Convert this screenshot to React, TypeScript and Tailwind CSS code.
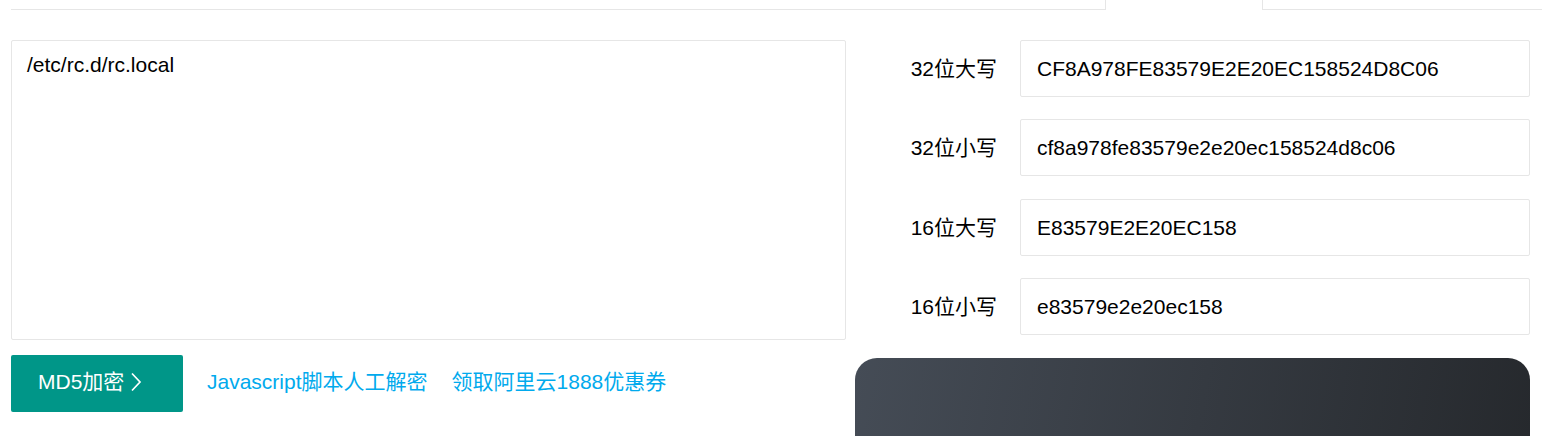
import React from 'react'

type HashRow = {
  label: string
  value: string
}

const rows: HashRow[] = [
  { label: '32位大写', value: 'CF8A978FE83579E2E20EC158524D8C06' },
  { label: '32位小写', value: 'cf8a978fe83579e2e20ec158524d8c06' },
  { label: '16位大写', value: 'E83579E2E20EC158' },
  { label: '16位小写', value: 'e83579e2e20ec158' },
]

export default function App() {
  return (
    <div
      className="w-[1542px] h-[436px] overflow-hidden bg-white text-black text-[21px]"
      style={{ fontFamily: '"Liberation Sans", "Noto Sans CJK SC", sans-serif' }}
    >
      {/* bottoms of the inputs above */}
      <div className="flex h-[10px]">
        <div className="shrink-0 ml-[11px] w-[1095px] border-b border-r border-[#e6e6e6]" />
        <div className="shrink-0 ml-[156px] w-[300px] border-b border-l border-[#e6e6e6]" />
      </div>

      <div className="flex mt-[30px] ml-[11px] gap-[9px]">
        <div className="w-[835px] flex flex-col">
          <div className="h-[300px] border border-[#e6e6e6] rounded-[2px] px-[15px] pt-[9px] leading-[30px]">
            /etc/rc.d/rc.local
          </div>
          <div className="flex items-center mt-[15px]">
            <button className="h-[57px] w-[172px] flex items-center pl-[27px] pb-[3px] bg-[#009688] text-white rounded-[2px]">
              MD5加密
              <svg width="12" height="20" viewBox="0 0 12 20" className="ml-[6px]">
                <path d="M2 1.5 L10 10 L2 18.5" fill="none" stroke="white" strokeWidth="1.7" />
              </svg>
            </button>
            <a className="ml-[24px] mb-[3px] text-[#01aaed]">Javascript脚本人工解密</a>
            <a className="ml-[24px] mb-[3px] text-[#01aaed]">领取阿里云1888优惠券</a>
          </div>
        </div>

        <div className="w-[675px] flex flex-col">
          <div className="flex flex-col gap-[22.4px]">
            {rows.map((row) => (
              <div key={row.label} className="flex items-center">
                <div className="w-[142px] text-right">{row.label}</div>
                <div className="ml-[23px] flex-1 h-[57px] border border-[#e6e6e6] rounded-[2px] flex items-center px-[16px]">
                  {row.value}
                </div>
              </div>
            ))}
          </div>
          <div className="mt-[23px] h-[200px] rounded-[22px] bg-[linear-gradient(100deg,#454c56,#25282c)]" />
        </div>
      </div>
    </div>
  )
}
